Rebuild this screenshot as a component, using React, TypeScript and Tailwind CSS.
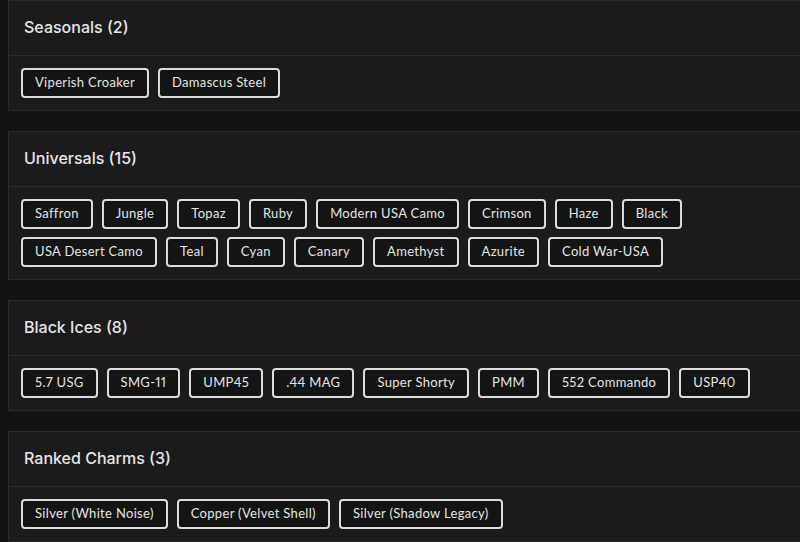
import React from "react";

interface Group {
  title: string;
  items: string[];
}

const groups: Group[] = [
  { title: "Seasonals", items: ["Viperish Croaker", "Damascus Steel"] },
  {
    title: "Universals",
    items: [
      "Saffron",
      "Jungle",
      "Topaz",
      "Ruby",
      "Modern USA Camo",
      "Crimson",
      "Haze",
      "Black",
      "USA Desert Camo",
      "Teal",
      "Cyan",
      "Canary",
      "Amethyst",
      "Azurite",
      "Cold War-USA",
    ],
  },
  {
    title: "Black Ices",
    items: ["5.7 USG", "SMG-11", "UMP45", ".44 MAG", "Super Shorty", "PMM", "552 Commando", "USP40"],
  },
  {
    title: "Ranked Charms",
    items: ["Silver (White Noise)", "Copper (Velvet Shell)", "Silver (Shadow Legacy)"],
  },
];

function Section({ group }: { group: Group }) {
  return (
    <div className="border border-[#2a2a2a] bg-[#1b1b1b]">
      <div className="flex h-[55px] items-center border-b border-[#2c2c2c] px-[15px] pb-[2px]">
        <h2 className="font-['Inter'] text-[16px] font-medium text-[#e6e6e6]">
          {group.title} ({group.items.length})
        </h2>
      </div>
      <div className="flex flex-wrap gap-x-[9px] gap-y-[8px] px-3 py-3">
        {group.items.map((item) => (
          <span
            key={item}
            className="flex h-[30px] items-center rounded-[4px] border-2 border-[#dcdcdc] bg-[#141414] px-3 font-['Lato'] text-[13px] tracking-[0.32px] text-[#e4e4e4] proportional-nums"
          >
            {item}
          </span>
        ))}
      </div>
    </div>
  );
}

export default function App() {
  return (
    <div className="h-[542px] overflow-hidden bg-[#121212] pl-2 font-sans">
      <div className="-mr-4 flex flex-col gap-5">
        {groups.map((g) => (
          <Section key={g.title} group={g} />
        ))}
      </div>
    </div>
  );
}
